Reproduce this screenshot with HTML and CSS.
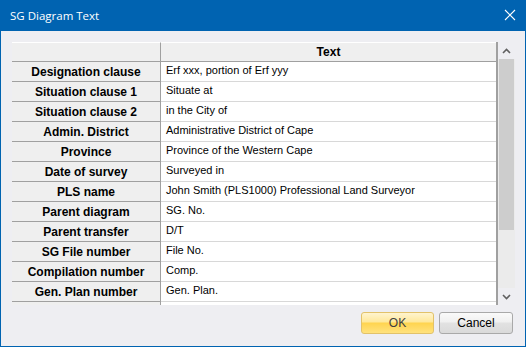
FILE: index.html
```html
<!DOCTYPE html>
<html>
<head>
<meta charset="utf-8">
<link rel="stylesheet" href="styles.css">
</head>
<body>
<div class="window">
  <div class="titlebar">
    <span class="title">SG Diagram Text</span>
    <svg class="close" width="12" height="12" viewBox="0 0 12 12"><path d="M1 1 L11 11 M11 1 L1 11" stroke="#fff" stroke-width="1.1" fill="none"/></svg>
  </div>
  <div class="content">
    <div class="grid">
      <div class="table">
        <div class="row head"><div class="rh corner"></div><div class="cell hcell">Text</div></div>
        <div class="row"><div class="rh">Designation clause</div><div class="cell">Erf xxx, portion of Erf yyy</div></div>
        <div class="row"><div class="rh">Situation clause 1</div><div class="cell">Situate at</div></div>
        <div class="row"><div class="rh">Situation clause 2</div><div class="cell">in the City of</div></div>
        <div class="row"><div class="rh">Admin. District</div><div class="cell">Administrative District of Cape</div></div>
        <div class="row"><div class="rh">Province</div><div class="cell">Province of the Western Cape</div></div>
        <div class="row"><div class="rh">Date of survey</div><div class="cell">Surveyed in</div></div>
        <div class="row"><div class="rh">PLS name</div><div class="cell">John Smith (PLS1000) Professional Land Surveyor</div></div>
        <div class="row"><div class="rh">Parent diagram</div><div class="cell">SG. No.</div></div>
        <div class="row"><div class="rh">Parent transfer</div><div class="cell">D/T</div></div>
        <div class="row"><div class="rh">SG File number</div><div class="cell">File No.</div></div>
        <div class="row"><div class="rh">Compilation number</div><div class="cell">Comp.</div></div>
        <div class="row"><div class="rh">Gen. Plan number</div><div class="cell">Gen. Plan.</div></div>
        <div class="row"><div class="rh"></div><div class="cell"></div></div>
      </div>
      <div class="scrollbar">
        <div class="arrow up"><svg width="9" height="6" viewBox="0 0 9 6"><path d="M1 5 L4.5 1.5 L8 5" stroke="#606060" stroke-width="1.6" fill="none"/></svg></div>
        <div class="track"><div class="thumb"></div></div>
        <div class="arrow down"><svg width="9" height="6" viewBox="0 0 9 6"><path d="M1 1 L4.5 4.5 L8 1" stroke="#606060" stroke-width="1.6" fill="none"/></svg></div>
      </div>
    </div>
    <div class="buttons">
      <button class="btn ok">OK</button>
      <button class="btn cancel">Cancel</button>
    </div>
  </div>
</div>
</body>
</html>
```
FILE: styles.css
```css
html, body {
  margin: 0;
  padding: 0;
  background: #ffffff;
}
.window {
  width: 526px;
  height: 347px;
  box-sizing: border-box;
  background: #0063b1;
  display: flex;
  flex-direction: column;
  font-family: "Liberation Sans", Arial, sans-serif;
}
.titlebar {
  height: 31px;
  display: flex;
  align-items: center;
  justify-content: space-between;
  padding: 0 10px 0 10px;
  flex: none;
}
.title {
  color: #ffffff;
  font-family: "Open Sans", "Noto Sans", sans-serif;
  font-size: 11.5px;
  padding-bottom: 1px;
}
.close {
  display: block;
  margin-bottom: 1px;
}
.content {
  flex: 1;
  margin: 0 1px 1px 1px;
  background: #eeeef2;
  padding: 11px 11px 12px 11px;
  display: flex;
  flex-direction: column;
}
.grid {
  display: flex;
  width: 503px;
  height: 263px;
}
.table {
  width: 486px;
  box-sizing: border-box;
  border-right: 2px solid #a0a0a0;
  overflow: hidden;
  background: #ffffff;
}
.row {
  display: flex;
  height: 20px;
}
.rh {
  width: 149px;
  flex: none;
  box-sizing: border-box;
  border-right: 1px solid #a0a0a0;
  border-bottom: 1px solid #a0a0a0;
  background: #efefef;
  font-weight: bold;
  font-size: 12px;
  color: #000;
  text-align: center;
  line-height: 19px;
  padding-top: 1px;
}
.cell {
  flex: 1;
  box-sizing: border-box;
  border-bottom: 1px solid #d8d8d8;
  font-size: 11px;
  color: #000;
  padding-left: 5px;
  line-height: 17px;
}
.head .rh, .head .cell {
  border-top: 1px solid #ffffff;
  border-bottom: 1px solid #a0a0a0;
  background: #efefef;
}
.head .rh {
  padding-top: 0;
  line-height: 18px;
}
.hcell {
  font-weight: bold;
  font-size: 12px;
  text-align: center;
  line-height: 18px;
  padding-left: 0;
}
.scrollbar {
  width: 17px;
  display: flex;
  flex-direction: column;
  background: #eeeef2;
}
.arrow {
  height: 17px;
  display: flex;
  align-items: center;
  justify-content: center;
  flex: none;
}
.track {
  flex: 1;
  background: #ebebeb;
  padding: 0 1px;
}
.thumb {
  height: 171px;
  background: #cdcdcd;
}
.buttons {
  display: flex;
  justify-content: flex-end;
  gap: 5px;
  margin-top: 7px;
  padding-right: 1px;
}
.btn {
  height: 22px;
  box-sizing: border-box;
  font-family: "Liberation Sans", Arial, sans-serif;
  font-size: 12px;
  border-radius: 3px;
  padding: 0;
  margin: 0;
}
.ok {
  width: 73px;
  border: 1px solid #e2c26a;
  background: linear-gradient(#fff4cf 0%, #ffe89a 45%, #ffd44f 50%, #ffe27e 100%);
  color: #404040;
}
.cancel {
  width: 74px;
  border: 1px solid #a9a9a9;
  background: linear-gradient(#fafafa 0%, #f0f0f0 45%, #e2e2e2 50%, #dadada 100%);
  color: #000;
}
```
